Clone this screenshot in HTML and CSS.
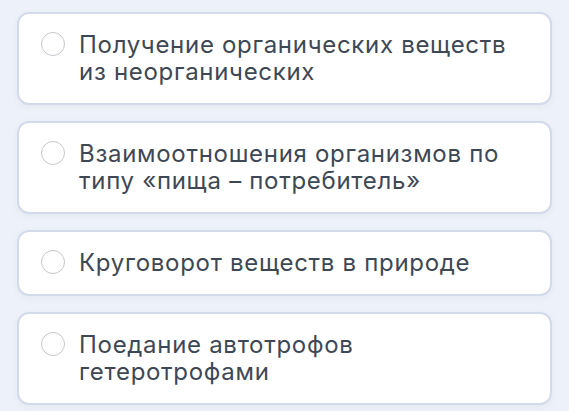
FILE: index.html
```html
<!DOCTYPE html>
<html lang="ru">
<head>
  <meta charset="UTF-8">
  <meta name="viewport" content="width=device-width, initial-scale=1.0">
  <title>Вопрос</title>
<link rel="stylesheet" href="styles.css">
</head>
<body>

<div class="main">
  <div class="answers">

    <label class="answer">
      <input type="radio" name="answer">
      <span class="answer_text">Получение органических веществ из неорганических</span>
    </label>

    <label class="answer">
      <input type="radio" name="answer">
      <span class="answer_text">Взаимоотношения организмов по типу «пища – потребитель»</span>
    </label>

    <label class="answer">
      <input type="radio" name="answer">
      <span class="answer_text">Круговорот веществ в природе</span>
    </label>

    <label class="answer">
      <input type="radio" name="answer">
      <span class="answer_text">Поедание автотрофов гетеротрофами</span>
    </label>

  </div>
</div>

</body>
</html>
```

FILE: styles.css
```css
*{
    padding: 0;
    margin: 0;
    box-sizing: border-box;
    font-family: 'Inter', sans-serif;
}
body{
    background: #edf1f9;
}
.main{
    width: 100%;
    padding: 12px 17px;
}

.answers{
  display: flex;
  flex-direction: column;
  gap: 16px;
}

/* one answer card */
.answer{
  display: flex;
  align-items: flex-start;
  gap: 14px;
  padding: 17px 20px 18px 22px;
  background: #ffffff;
  border: 2px solid #d3daea;
  border-radius: 12px;
  box-shadow: 0 2px 6px rgba(120,135,170,0.08);
  cursor: pointer;
}

.answer input[type=radio]{
  appearance: none;
  -webkit-appearance: none;
  flex: none;
  width: 24px;
  height: 24px;
  margin-top: 1px;
  border: 1px solid #c4c7cc;
  border-radius: 50%;
  background: #ffffff;
  outline: none;
  cursor: pointer;
}

.answer_text{
  font-size: 24px;
  line-height: 27px;
  letter-spacing: 0.7px;
  color: #3e4855;
}
```
